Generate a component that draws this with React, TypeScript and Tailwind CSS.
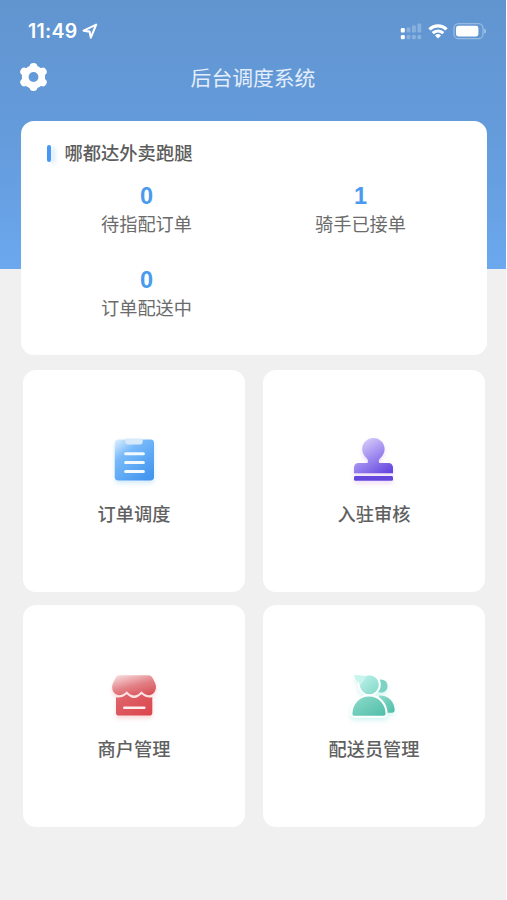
import * as React from "react";

export default function App() {
  return (
    <div className="h-[900px] w-[507px] overflow-hidden border-r border-white bg-[#f0f0f0] font-['Inter','Noto_Sans_CJK_SC',sans-serif]">
      <header className="h-[269px] bg-linear-to-b from-[#6195d0] via-[#649bdb] to-[#6ba8ee]">
        <StatusBar />
        <div className="grid grid-cols-3 items-start px-[19px]">
          <GearIcon />
          <h1 className="whitespace-nowrap text-center text-[20.8px] font-normal leading-[34px] text-[#e3eefa]">
            后台调度系统
          </h1>
        </div>
      </header>

      {/* summary card, pulled up over the header */}
      <section className="-mt-[148px] ml-[21px] h-[234px] w-[466px] rounded-[13px] bg-white">
        <div className="flex items-center pl-[26px] pt-[18px]">
          <span className="h-[17px] w-1 rounded-sm bg-[#4699ee] shadow-[4px_2px_4px_rgba(70,153,238,0.22)]" />
          <h2 className="ml-[13.5px] text-[18.3px] font-medium leading-7 text-[#5c5c5c]">
            哪都达外卖跑腿
          </h2>
        </div>
        <div className="mt-4 grid grid-cols-2 gap-y-[29px] pl-[18.5px] pr-[19.5px]">
          <Stat value={0} label="待指配订单" />
          <Stat value={1} label="骑手已接单" />
          <Stat value={0} label="订单配送中" />
        </div>
      </section>

      <main className="ml-[23px] mt-[15px] grid w-[462px] grid-cols-2 gap-x-[18px] gap-y-[13px]">
        <MenuTile icon={<OrderIcon />} label="订单调度" />
        <MenuTile icon={<StampIcon />} label="入驻审核" />
        <MenuTile icon={<ShopIcon />} label="商户管理" />
        <MenuTile icon={<RiderIcon />} label="配送员管理" />
      </main>
    </div>
  );
}

function Stat({ value, label }: { value: number; label: string }) {
  return (
    <div className="flex flex-col items-center">
      <span className="font-['Liberation_Sans',sans-serif] text-[23.5px] font-bold leading-[27px] text-[#4a9bee]">
        {value}
      </span>
      <span className="text-[18.2px] leading-7 text-[#6b6b6b]">{label}</span>
    </div>
  );
}

type MenuTileProps = {
  icon: React.ReactNode;
  label: string;
};

function MenuTile({ icon, label }: MenuTileProps) {
  return (
    <div className="flex h-[222px] flex-col items-center rounded-[13px] bg-white pt-16">
      {icon}
      <span className="mt-3 text-[18.2px] font-medium leading-7 text-[#606060]">
        {label}
      </span>
    </div>
  );
}

function StatusBar() {
  return (
    <div className="flex h-[62px] items-center justify-between pl-[28px] pr-[19px]">
      <div className="flex items-center gap-[5px] text-white">
        <span className="text-[19.5px] font-semibold leading-6 tracking-[0.25px]">
          11:49
        </span>
        <svg width="16" height="16" viewBox="0 0 16 16" fill="none">
          <path
            d="M14.2 1.6 1.6 7.6l6 1 1.2 6z"
            stroke="currentColor"
            strokeWidth="2.1"
            strokeLinejoin="round"
          />
        </svg>
      </div>

      <svg width="87" height="18" viewBox="400 22 87 18" fill="#fff">
        {/* dual sim signal */}
        <rect x="400.8" y="28" width="4" height="4.6" rx="1.2" />
        <rect x="400.8" y="35" width="4" height="4.2" rx="1.2" />
        <g opacity="0.25">
          <rect x="406.6" y="27.6" width="3.8" height="5" rx="1" />
          <rect x="412" y="25.6" width="3.8" height="7" rx="1" />
          <rect x="417.4" y="23.6" width="3.8" height="9" rx="1" />
          <rect x="406.6" y="35" width="3.8" height="4.2" rx="1.2" />
          <rect x="412" y="35" width="3.8" height="4.2" rx="1.2" />
          <rect x="417.4" y="35" width="3.8" height="4.2" rx="1.2" />
        </g>
        {/* wifi */}
        <g fill="none" stroke="#fff" strokeWidth="3.2">
          <path d="M429.4 29.3a12.6 12.6 0 0 1 17.2 0" />
          <path d="M432.7 33.1a7.7 7.7 0 0 1 10.6 0" />
        </g>
        <path d="M438 38.6l-3-3.1a4.3 4.3 0 0 1 6 0z" />
        {/* battery */}
        <rect
          x="454"
          y="23.7"
          width="29"
          height="15"
          rx="4.5"
          fill="none"
          stroke="#fff"
          strokeOpacity="0.35"
          strokeWidth="1.3"
        />
        <rect x="456" y="25.8" width="22.4" height="10.6" rx="2.4" />
        <path d="M484.3 28.6c2 .8 2 4.4 0 5.2z" opacity="0.5" />
      </svg>
    </div>
  );
}

function GearIcon() {
  return (
    <svg width="29" height="30" viewBox="-14.5 -15 29 30">
      <g stroke="#fff" strokeWidth="8" strokeLinecap="round">
        <path d="M0-10.1v20.2M-9.2-5.3 9.2 5.3M-9.2 5.3 9.2-5.3" />
      </g>
      <circle r="11.6" fill="#fff" />
      <circle r="4.9" fill="#639ad9" />
    </svg>
  );
}

function OrderIcon() {
  return (
    <svg
      width="48"
      height="54"
      viewBox="0 0 48 54"
      className="drop-shadow-[0_3px_2px_rgba(90,180,245,0.25)]"
    >
      <defs>
        <linearGradient id="order" x1="0" y1="0" x2="0.75" y2="1">
          <stop offset="0" stopColor="#e0f1ff" />
          <stop offset="0.35" stopColor="#78bafa" />
          <stop offset="1" stopColor="#4496ef" />
        </linearGradient>
      </defs>
      <rect x="4.8" y="5.4" width="39.2" height="41" rx="3.4" fill="url(#order)" />
      <path
        d="M15.3 4.5h17.4v3.3a2.6 2.6 0 0 1-2.6 2.6H17.9a2.6 2.6 0 0 1-2.6-2.6z"
        fill="#d6eafc"
      />
      <path
        d="M15.6 19.7h17.8M15.6 28.5h17.8M15.6 37.4h17.8"
        stroke="#f2f9ff"
        strokeWidth="3"
        strokeLinecap="round"
      />
    </svg>
  );
}

function StampIcon() {
  return (
    <svg
      width="48"
      height="54"
      viewBox="0 0 48 54"
      className="drop-shadow-[0_3px_2px_rgba(190,120,220,0.25)]"
    >
      <defs>
        <linearGradient
          id="stamp"
          x1="12"
          y1="6"
          x2="34"
          y2="42"
          gradientUnits="userSpaceOnUse"
        >
          <stop offset="0" stopColor="#d6cdfa" />
          <stop offset="0.5" stopColor="#9b86ee" />
          <stop offset="1" stopColor="#6546df" />
        </linearGradient>
      </defs>
      <path
        d="M23.4 4c6.3 0 11.2 4.9 11.2 11.1 0 4.2-2.2 7-4.4 9.1-1 1-1.4 2-1.4 3.2 0 1 .7 1.7 1.7 1.7h8c2.7 0 4.5 1.9 4.5 4.5v5.6H4v-5.6c0-2.6 1.8-4.5 4.5-4.5h7.800c1 0 1.700-.7 1.700-1.700 0-1.200-.4-2.200-1.400-3.200-2.200-2.100-4.400-4.900-4.400-9.100C12.200 8.900 17.100 4 23.400 4z"
        fill="url(#stamp)"
      />
      <rect x="4" y="42" width="39" height="4.8" rx="1.4" fill="#6547de" />
    </svg>
  );
}

function ShopIcon() {
  return (
    <svg
      width="48"
      height="54"
      viewBox="0 0 48 54"
      className="drop-shadow-[0_3px_2px_rgba(235,110,110,0.25)]"
    >
      <defs>
        <linearGradient id="shop" x1="0.1" y1="0" x2="0.7" y2="1">
          <stop offset="0" stopColor="#f7dcdd" />
          <stop offset="0.55" stopColor="#e28186" />
          <stop offset="1" stopColor="#d9555b" />
        </linearGradient>
        <linearGradient id="shopBody" x1="0" y1="0" x2="1" y2="1">
          <stop offset="0" stopColor="#de686e" />
          <stop offset="1" stopColor="#dc444b" />
        </linearGradient>
      </defs>
      <path
        d="M6 28.2c3.8 1 7.8-.4 10.7-3 2.1 1.8 4.4 3.9 7.4 3.9s5.3-2.1 7.4-3.9c2.9 2.6 7.2 4 10.8 3v15.5a2.8 2.8 0 0 1-2.8 2.8H8.8A2.8 2.8 0 0 1 6 43.7z"
        fill="url(#shopBody)"
      />
      <path
        d="M9.8 6.2h28.6c1.9 0 3.3 1 4.1 2.500l2.600 5.400c2.600 5.500-.9 12.100-6.300 12.100-3.200 0-5.200-1.600-7.300-3.900-2.100 2.200-4.300 4.200-7.400 4.200s-5.300-2-7.400-4.200c-2.100 2.300-4.100 3.900-7.300 3.900-5.700 0-9-6.600-6.300-12.100l2.600-5.400c.8-1.500 2.200-2.500 4.100-2.500z"
        fill="url(#shop)"
      />
      <path
        d="M14.3 38.8h20"
        stroke="#fdeeee"
        strokeWidth="2.6"
        strokeLinecap="round"
      />
    </svg>
  );
}

function RiderIcon() {
  return (
    <svg
      width="48"
      height="54"
      viewBox="0 0 48 54"
      className="drop-shadow-[0_3px_2px_rgba(90,220,205,0.25)]"
    >
      <defs>
        <linearGradient id="riderHead" x1="0" y1="0" x2="0.8" y2="1">
          <stop offset="0" stopColor="#c3f3ec" />
          <stop offset="1" stopColor="#83d9c9" />
        </linearGradient>
        <linearGradient id="riderBody" x1="0" y1="0" x2="1" y2="1">
          <stop offset="0" stopColor="#90dccb" />
          <stop offset="1" stopColor="#4dbda8" />
        </linearGradient>
      </defs>
      <circle cx="31" cy="17" r="6.6" fill="#7bd3c4" />
      <path
        d="M29 26.4c8.8-.4 15.2 5.6 15.6 14 .1 2.2-.9 3.3-2.8 3.3H30z"
        fill="url(#riderBody)"
      />
      {/* front figure, outlined in white to separate it from the one behind */}
      <circle
        cx="19.3"
        cy="15.7"
        r="10.5"
        fill="url(#riderHead)"
        stroke="#fff"
        strokeWidth="2"
      />
      <path
        d="M4.5 7.3c-.8-.7-.2-1.400.8-1.200l11.400.8-6.700 9.500c-.8-2.700-1.200-3.800-3.100-4.600-1.400-.7-1.600-2.500-2.400-4.500z"
        fill="#c8f4ee"
      />
      <path
        d="M1.4 44.800c.2-10.400 7.600-18.200 17.600-18.200s17.400 7.800 17.600 18.200c0 1.700-1.100 2.900-2.900 2.900H4.300c-1.800 0-2.900-1.200-2.900-2.900z"
        fill="url(#riderBody)"
        stroke="#fff"
        strokeWidth="2"
      />
    </svg>
  );
}
